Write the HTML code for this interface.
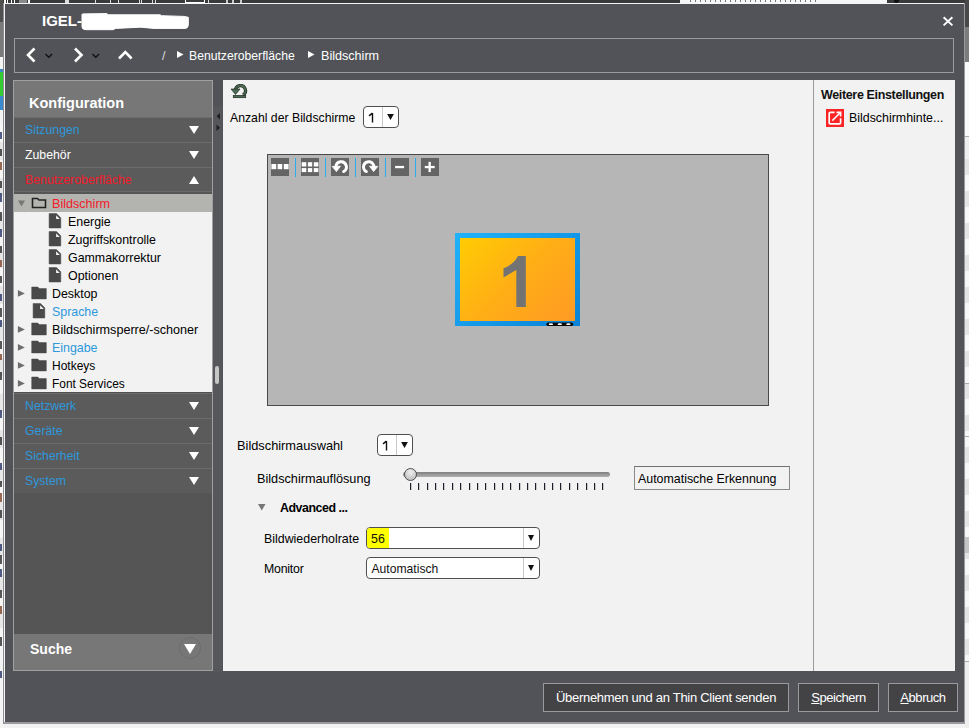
<!DOCTYPE html>
<html><head><meta charset="utf-8">
<style>
*{margin:0;padding:0;box-sizing:border-box}
html,body{width:969px;height:728px;overflow:hidden;background:#f2f2f2;font-family:"Liberation Sans",sans-serif}
.a{position:absolute}
.t{position:absolute;white-space:nowrap;line-height:1}
#win{left:3px;top:3px;width:962px;height:721px;background:#525358;border-left:1px solid #8c8c90;border-bottom:2px solid #9a9a9e;border-right:1px solid #9a9a9e}
#win:before{content:"";position:absolute;left:0;top:0;right:0;height:1px;background:#f4f4f4}
#win:after{content:"";position:absolute;left:0;top:0;bottom:0;width:1px;background:#f4f4f4}
.hdr{position:absolute;left:14px;width:198px;height:25px;background:#5b5b5b;border-top:1px solid #6c6c6c}
.hdr span{position:absolute;left:11px;top:6px;font-size:12.3px;line-height:12px;white-space:nowrap}
.tri{position:absolute;left:175px;top:8px;width:0;height:0;border-left:5px solid transparent;border-right:5px solid transparent;border-top:8px solid #fff}
.triu{position:absolute;left:175px;top:8px;width:0;height:0;border-left:5px solid transparent;border-right:5px solid transparent;border-bottom:8px solid #fff}
.tr{position:absolute;font-size:12.4px;line-height:12px;color:#000;white-space:nowrap}
.blue{color:#2e98dc}
.red{color:#f41a2a}
.white{color:#fff}
.btn{position:absolute;top:683px;height:29px;background:#434346;border:1px solid #9a9a9e;color:#fff;font-size:13px;line-height:27px;text-align:center;letter-spacing:-0.45px}
.exp{position:absolute;left:19px;width:0;height:0;border-top:3.5px solid transparent;border-bottom:3.5px solid transparent;border-left:6px solid #6a6a6a}
.lbl{position:absolute;white-space:nowrap;line-height:1;font-size:12.4px;color:#000}
.dd{position:absolute;background:#fff;border:1.4px solid #505050;border-radius:4px}
.dd .sep{position:absolute;top:0;bottom:0;width:1px;background:#c8c8c8}
.dd .arr{position:absolute;width:0;height:0;border-left:3.8px solid transparent;border-right:3.8px solid transparent;border-top:6.5px solid #111}
.tb{position:absolute;top:158px;width:18px;height:18px;background:#646464}
.bsep{position:absolute;top:158px;width:1px;height:19px;background:#2aaef0}
</style></head><body>
<!-- desktop strips -->
<div class="a" style="left:0;top:0;width:969px;height:3px;background:#3a3a3c"></div>
<div class="a" style="left:3.7px;top:0;width:1.9px;height:2.5px;background:#fff"></div><div class="a" style="left:6.5px;top:0;width:1.5px;height:2.5px;background:#fff"></div><div class="a" style="left:10.8px;top:0;width:1.2px;height:2.5px;background:#fff"></div><div class="a" style="left:13.6px;top:0;width:1.6px;height:2.5px;background:#fff"></div><div class="a" style="left:18.6px;top:0;width:8.6px;height:2.5px;background:#8a8a8a"></div><div class="a" style="left:28.2px;top:0;width:1.5px;height:2.5px;background:#fff"></div><div class="a" style="left:65px;top:0;width:3.5px;height:2.5px;background:#ddd"></div><div class="a" style="left:95px;top:0;width:1px;height:2.5px;background:#ddd"></div><div class="a" style="left:110px;top:0;width:1px;height:2.5px;background:#ddd"></div><div class="a" style="left:118px;top:0;width:1px;height:2.5px;background:#ddd"></div><div class="a" style="left:138.7px;top:0;width:1px;height:2.5px;background:#ddd"></div><div class="a" style="left:140.5px;top:0;width:1px;height:2.5px;background:#ddd"></div><div class="a" style="left:152.3px;top:0;width:1px;height:2.5px;background:#ddd"></div><div class="a" style="left:154.5px;top:0;width:1px;height:2.5px;background:#ddd"></div><div class="a" style="left:185px;top:0;width:1.2px;height:2.5px;background:#fff"></div><div class="a" style="left:203.5px;top:0;width:1.2px;height:2.5px;background:#fff"></div><div class="a" style="left:208px;top:0;width:1px;height:2.5px;background:#ddd"></div><div class="a" style="left:226px;top:0;width:1.5px;height:2.5px;background:#ccc"></div><div class="a" style="left:232px;top:0;width:1.5px;height:2.5px;background:#ccc"></div><div class="a" style="left:240px;top:0;width:1.5px;height:2.5px;background:#ccc"></div><div class="a" style="left:185px;top:1.5px;width:20px;height:1px;background:#fff"></div><div class="a" style="left:680px;top:0;width:207px;height:3px;background:#f6f6f6"></div><div class="a" style="left:690px;top:0;width:130px;height:1.5px;background:repeating-linear-gradient(90deg,#777 0 1px,transparent 1px 5px)"></div><div class="a" style="left:894px;top:0;width:5px;height:2.5px;border-radius:0 0 3px 3px;background:#111"></div>
<div class="a" style="left:0;top:0;width:3px;height:728px;background:#f4f4f4"></div>
<div class="a" style="left:0;top:0;width:3px;height:22px;background:#505050"></div>
<div class="a" style="left:0;top:22px;width:3px;height:35px;background:#7a7a7a"></div>
<div class="a" style="left:0;top:69px;width:3px;height:3px;background:#3a8ad0"></div>
<div class="a" style="left:0;top:72px;width:3px;height:24px;background:#33cc33"></div>
<div class="a" style="left:0;top:96px;width:3px;height:14px;background:#3a8ad0"></div>
<div class="a" style="left:0;top:124px;width:3px;height:520px;background:repeating-linear-gradient(#f6f6f6 0 18px,#e6e6e6 18px 36px)"></div>
<div class="a" style="left:0;top:132px;width:2px;height:7px;background:#1a2a60;opacity:.75"></div><div class="a" style="left:0;top:149px;width:2px;height:7px;background:#222;opacity:.75"></div><div class="a" style="left:0;top:162px;width:2px;height:8px;background:#7a3a20;opacity:.75"></div><div class="a" style="left:0;top:181px;width:2px;height:7px;background:#222;opacity:.75"></div><div class="a" style="left:0;top:193px;width:2px;height:9px;background:#1a2a60;opacity:.75"></div><div class="a" style="left:0;top:212px;width:2px;height:9px;background:#222;opacity:.75"></div><div class="a" style="left:0;top:229px;width:2px;height:8px;background:#1a2a60;opacity:.75"></div><div class="a" style="left:0;top:246px;width:2px;height:7px;background:#222;opacity:.75"></div><div class="a" style="left:0;top:260px;width:2px;height:7px;background:#7a3a20;opacity:.75"></div><div class="a" style="left:0;top:276px;width:2px;height:7px;background:#222;opacity:.75"></div><div class="a" style="left:0;top:294px;width:2px;height:7px;background:#1a2a60;opacity:.75"></div><div class="a" style="left:0;top:308px;width:2px;height:9px;background:#222;opacity:.75"></div><div class="a" style="left:0;top:320px;width:2px;height:7px;background:#1a2a60;opacity:.75"></div><div class="a" style="left:0;top:341px;width:2px;height:8px;background:#222;opacity:.75"></div><div class="a" style="left:0;top:354px;width:2px;height:6px;background:#7a3a20;opacity:.75"></div><div class="a" style="left:0;top:372px;width:2px;height:8px;background:#222;opacity:.75"></div><div class="a" style="left:0;top:410px;width:2px;height:8px;background:#1a2a60;opacity:.75"></div><div class="a" style="left:0;top:437px;width:2px;height:8px;background:#222;opacity:.75"></div><div class="a" style="left:0;top:463px;width:2px;height:7px;background:#1a2a60;opacity:.75"></div><div class="a" style="left:0;top:481px;width:2px;height:6px;background:#222;opacity:.75"></div><div class="a" style="left:0;top:493px;width:2px;height:9px;background:#7a3a20;opacity:.75"></div><div class="a" style="left:0;top:510px;width:2px;height:8px;background:#222;opacity:.75"></div><div class="a" style="left:0;top:544px;width:2px;height:7px;background:#1a2a60;opacity:.75"></div><div class="a" style="left:0;top:555px;width:2px;height:9px;background:#222;opacity:.75"></div><div class="a" style="left:0;top:569px;width:2px;height:8px;background:#1a2a60;opacity:.75"></div><div class="a" style="left:0;top:590px;width:2px;height:8px;background:#222;opacity:.75"></div><div class="a" style="left:0;top:606px;width:2px;height:8px;background:#7a3a20;opacity:.75"></div><div class="a" style="left:0;top:637px;width:2px;height:9px;background:#222;opacity:.75"></div><div class="a" style="left:0;top:671px;width:2px;height:7px;background:#1a2a60;opacity:.75"></div>
<div class="a" style="left:965px;top:0;width:4px;height:728px;background:#eeeeee"></div>
<div class="a" style="left:965px;top:0;width:4px;height:27px;background:#48484a"></div>
<div class="a" style="left:965px;top:27px;width:4px;height:35px;background:#7c7c7c"></div>
<div class="a" style="left:965px;top:159px;width:4px;height:502px;background:repeating-linear-gradient(#e3e3e3 0 16px,#f7f7f7 16px 32px)"></div>
<div class="a" style="left:965px;top:62px;width:4px;height:74px;background:#fafafa"></div>
<div class="a" style="left:965px;top:136px;width:4px;height:1px;background:#aaa"></div>
<div class="a" style="left:965px;top:383px;width:4px;height:1px;background:#aaa"></div>
<div class="a" style="left:965px;top:436px;width:4px;height:1px;background:#aaa"></div>
<div class="a" style="left:965px;top:537px;width:4px;height:16px;background:#c4c4c4"></div>
<div class="a" style="left:965px;top:661px;width:4px;height:1px;background:#aaa"></div>

<div id="win" class="a"></div>

<!-- title -->
<div class="t" style="left:42px;top:13px;font-size:15px;font-weight:bold;color:#fff">IGEL-</div>
<svg class="a" style="left:76px;top:8px" width="120" height="28"><path d="M6 6.5Q6 5.9 7 5.9L31 5.6L32.2 6.8L84.2 6.8L85.4 7.7L107.7 8.4L112.3 9.3L112.3 17.3Q112 20.4 109 20.4L78 20.4L64.4 19.2L39.6 20.4L37.2 21.7L10 21.7Q6 21.5 6 19Z" fill="#fff" stroke="#fff" stroke-width="1" stroke-linejoin="round"/></svg>
<!-- close -->
<svg class="a" style="left:942px;top:15px" width="12" height="12"><path d="M1.6 2.2L10.4 10.4M10.4 2.2L1.6 10.4" stroke="#fff" stroke-width="1.9"/></svg>

<!-- nav box -->
<div class="a" style="left:14px;top:38px;width:940px;height:35px;border:1px solid #9c9ca0"></div>
<svg class="a" style="left:0;top:38px" width="400" height="35">
 <path d="M34.5 10.5L28 17L34.5 23.5" stroke="#fff" stroke-width="2.6" fill="none"/>
 <path d="M45.5 16l3.3 3.3l3.3-3.3" stroke="#111" stroke-width="1.4" fill="none"/>
 <path d="M75 10.5L81.5 17L75 23.5" stroke="#fff" stroke-width="2.6" fill="none"/>
 <path d="M92.5 16l3.3 3.3l3.3-3.3" stroke="#111" stroke-width="1.4" fill="none"/>
 <path d="M119 20.5L125.3 14.2L131.6 20.5" stroke="#fff" stroke-width="2.6" fill="none"/>
 <path d="M177 13L183.5 16.5L177 20z" fill="#fff"/>
 <path d="M308 13L314.5 16.5L308 20z" fill="#fff"/>
</svg>
<div class="t" style="left:162px;top:50px;font-size:12.5px;color:#ddd">/</div>
<div class="t" style="left:189px;top:50px;font-size:12.2px;color:#fff">Benutzeroberfläche</div>
<div class="t" style="left:321px;top:50px;font-size:12.6px;color:#fff">Bildschirm</div>

<!-- left panel -->
<div class="a" style="left:13px;top:80px;width:200px;height:591px;background:#555;border:1px solid #a0a0a0"></div>
<div class="a" style="left:14px;top:81px;width:198px;height:37px;background:#777"></div>
<div class="t" style="left:29px;top:96px;font-size:14.5px;font-weight:bold;color:#fff">Konfiguration</div>

<div class="hdr" style="top:117px"><span class="blue">Sitzungen</span><i class="tri"></i></div>
<div class="hdr" style="top:142px"><span class="white">Zubehör</span><i class="tri"></i></div>
<div class="hdr" style="top:167px"><span class="red">Benutzeroberfläche</span><i class="triu"></i></div>

<div class="a" style="left:14px;top:191px;width:198px;height:3px;background:#565656;border-top:1px solid #686868"></div>
<div class="a" style="left:14px;top:194px;width:198px;height:198px;background:#f2f2f2"></div>
<div class="a" style="left:14px;top:194px;width:198px;height:18px;background:#b3b3af"></div>

<!-- tree icons -->
<svg class="a" style="left:14px;top:193px" width="198" height="199">
 <path d="M4 7.5h7L7.5 13.5z" fill="#777"/>
 <path d="M18.5 5.5h5l1.5 1.5h6.5v7.5h-13z" fill="none" stroke="#222" stroke-width="1.6"/>
 <g fill="#494949" stroke="#494949" stroke-width="0.5" stroke-linejoin="round"><path d="M35.1 20.5H42.5L46.8 24.8V35.0H35.1Z"/><path d="M35.1 38.5H42.5L46.8 42.8V53.0H35.1Z"/><path d="M35.1 56.5H42.5L46.8 60.8V71.0H35.1Z"/><path d="M35.1 74.5H42.5L46.8 78.8V89.0H35.1Z"/><path d="M19.1 110.5H26.5L30.8 114.8V125.0H19.1Z"/><path d="M17.7 94.0H23.8L25.3 95.6H32.3V105.9H17.7Z"/><path d="M17.7 130.0H23.8L25.3 131.6H32.3V141.9H17.7Z"/><path d="M17.7 148.0H23.8L25.3 149.6H32.3V159.9H17.7Z"/><path d="M17.7 166.0H23.8L25.3 167.6H32.3V177.9H17.7Z"/><path d="M17.7 184.0H23.8L25.3 185.6H32.3V195.9H17.7Z"/></g>
 <g fill="#f4f4f4"><path d="M42.1 22.3V25.9H45.8Z"/><path d="M42.1 40.3V43.9H45.8Z"/><path d="M42.1 58.3V61.9H45.8Z"/><path d="M42.1 76.3V79.9H45.8Z"/><path d="M26.1 112.3V115.9H29.8Z"/></g>
 <g fill="#6e6e6e"><path d="M3.9 97.0l6.9 3.4l-6.9 3.4z"/><path d="M3.9 133.0l6.9 3.4l-6.9 3.4z"/><path d="M3.9 151.0l6.9 3.4l-6.9 3.4z"/><path d="M3.9 169.0l6.9 3.4l-6.9 3.4z"/><path d="M3.9 187.0l6.9 3.4l-6.9 3.4z"/></g>
</svg>

<div class="tr red" style="left:52px;top:198px;font-size:12.6px">Bildschirm</div>
<div class="tr" style="left:68px;top:216px">Energie</div>
<div class="tr" style="left:68px;top:234px">Zugriffskontrolle</div>
<div class="tr" style="left:68px;top:252px">Gammakorrektur</div>
<div class="tr" style="left:68px;top:270px">Optionen</div>
<div class="tr" style="left:52px;top:288px">Desktop</div>
<div class="tr blue" style="left:52px;top:306px">Sprache</div>
<div class="tr" style="left:52px;top:324px;font-size:12.6px">Bildschirmsperre/-schoner</div>
<div class="tr blue" style="left:52px;top:342px">Eingabe</div>
<div class="tr" style="left:52px;top:360px;font-size:12px">Hotkeys</div>
<div class="tr" style="left:52px;top:378px;font-size:11.9px">Font Services</div>

<div class="a" style="left:14px;top:392px;width:198px;height:1px;background:#505050"></div>
<div class="hdr" style="top:393px"><span class="blue">Netzwerk</span><i class="tri"></i></div>
<div class="hdr" style="top:418px"><span class="blue">Geräte</span><i class="tri"></i></div>
<div class="hdr" style="top:443px"><span class="blue">Sicherheit</span><i class="tri"></i></div>
<div class="hdr" style="top:468px"><span class="blue">System</span><i class="tri"></i></div>

<div class="a" style="left:14px;top:634px;width:198px;height:36px;background:#777"></div>
<div class="t" style="left:30px;top:642px;font-size:14px;font-weight:bold;color:#fff">Suche</div>
<div class="a" style="left:179px;top:637px;width:22px;height:22px;border-radius:50%;border:1px solid #6c6c6c"></div>
<div class="a" style="left:183.8px;top:644px;width:0;height:0;border-left:6.2px solid transparent;border-right:6.2px solid transparent;border-top:10.2px solid #fff"></div>

<!-- splitter -->
<div class="a" style="left:213px;top:106px;width:9px;height:566px;background:#56575b"></div>
<svg class="a" style="left:213px;top:110px" width="9" height="25"><path d="M7 3v6.5l-3.5-3.25z" fill="#1e1e1e"/><path d="M3.5 14.5v6.5l3.5-3.25z" fill="#1e1e1e"/></svg>
<div class="a" style="left:215.3px;top:366px;width:3.3px;height:18px;background:#c6c6c6;border-radius:2px"></div>

<!-- main content -->
<div class="a" style="left:223px;top:80px;width:590px;height:591px;background:#f2f2f2"></div>
<div class="a" style="left:813px;top:80px;width:142px;height:591px;background:#f2f2f2;border-left:1px solid #9a9a9a"></div>

<!-- reset icon -->
<svg class="a" style="left:226px;top:80px" width="28" height="22">
 <path d="M9.5 10.6A5 5 0 1 1 17 14.9" fill="none" stroke="#1e2a20" stroke-width="3.2"/>
 <path d="M9.5 10.6A5 5 0 1 1 17 14.9" fill="none" stroke="#4d6b52" stroke-width="1.8"/>
 <path d="M5 9L14 9L9.5 14.5z" fill="#4d6b52" stroke="#1e2a20" stroke-width="0.7"/>
 <rect x="7.3" y="15.4" width="12.4" height="2.3" fill="#4d6b52" stroke="#1e2a20" stroke-width="0.7"/>
</svg>

<div class="lbl" style="left:230px;top:112px;font-size:12.25px">Anzahl der Bildschirme</div>
<div class="dd" style="left:363px;top:106px;width:36px;height:22px"><i class="sep" style="left:17.5px"></i><svg class="a" style="left:-1.4px;top:-1.4px" width="36" height="22"><path d="M6 9.9L9.4 7.1M9.5 6.9V16.5" stroke="#111" stroke-width="1.4" fill="none"/><path d="M24.1 8.1H30.9L27.5 13.9z" fill="#111"/></svg></div>

<!-- canvas -->
<div class="a" style="left:267px;top:154px;width:502px;height:252px;background:#b6b6b6;border:1px solid #4a4a4a;border-right-width:1.5px;border-bottom-width:1.5px"></div>
<div class="tb" style="left:271px"></div>
<div class="tb" style="left:301px"></div>
<div class="tb" style="left:331px"></div>
<div class="tb" style="left:361px"></div>
<div class="tb" style="left:391px"></div>
<div class="tb" style="left:421px"></div>
<div class="bsep" style="left:295px"></div>
<div class="bsep" style="left:325px"></div>
<div class="bsep" style="left:355px"></div>
<div class="bsep" style="left:385px"></div>
<div class="bsep" style="left:415px"></div>
<svg class="a" style="left:271px;top:158px" width="170" height="18">
 <g fill="#fff">
  <rect x="0.4" y="6" width="4.8" height="5.2"/><rect x="6.6" y="6" width="4.6" height="5.2"/><rect x="12.8" y="6" width="4.8" height="5.2"/>
  <rect x="30.7" y="4.2" width="4.6" height="4.3"/><rect x="36.9" y="4.2" width="4.3" height="4.3"/><rect x="42.8" y="4.2" width="4.6" height="4.3"/>
  <rect x="30.7" y="10.1" width="4.6" height="4"/><rect x="36.9" y="10.1" width="4.3" height="4"/><rect x="42.8" y="10.1" width="4.6" height="4"/>
  <rect x="124.1" y="7.9" width="9" height="2.3"/>
  <rect x="153.8" y="7.9" width="9.9" height="2.3"/><rect x="157.5" y="3.9" width="2.3" height="10.2"/>
 </g>
 <path d="M65 9A5.2 5.2 0 1 1 72.7 13.5" fill="none" stroke="#fff" stroke-width="3" stroke-linecap="round"/>
 <path d="M61.2 8.4L69.5 8.2L65.4 13.6z" fill="#fff" stroke="#fff" stroke-width="0.8" stroke-linejoin="round"/>
 <path d="M102.9 9A5.2 5.2 0 1 0 95.3 13.5" fill="none" stroke="#fff" stroke-width="3" stroke-linecap="round"/>
 <path d="M106.8 8.4L98.5 8.2L102.6 13.6z" fill="#fff" stroke="#fff" stroke-width="0.8" stroke-linejoin="round"/>
</svg>

<!-- monitor -->
<div class="a" style="left:455px;top:233px;width:125px;height:93px;background:linear-gradient(135deg,#20b2fb,#0a82d6)"></div>
<div class="a" style="left:460px;top:238px;width:115px;height:83px;background:linear-gradient(135deg,#ffcc02 0%,#ffae16 50%,#ff9a24 100%)"></div>
<svg class="a" style="left:495px;top:250px" width="40" height="62"><path d="M23 6H30.8V56.9H21.3V20L8.5 27.4V18.3C14 16.5 20 12 23 6Z" fill="#737373"/></svg>
<svg class="a" style="left:546px;top:322px" width="28" height="5"><rect x="0.4" y="0.5" width="26.8" height="3.5" rx="1.7" fill="#0a0a0a"/><g fill="#fff"><ellipse cx="4.9" cy="2.2" rx="2.2" ry="0.9"/><ellipse cx="13.8" cy="2.2" rx="2.2" ry="0.9"/><ellipse cx="22.4" cy="2.2" rx="2.2" ry="0.9"/></g></svg>

<div class="lbl" style="left:237px;top:440px;font-size:12.8px">Bildschirmauswahl</div>
<div class="dd" style="left:377px;top:434px;width:36px;height:22px"><i class="sep" style="left:17.5px"></i><svg class="a" style="left:-1.4px;top:-1.4px" width="36" height="22"><path d="M6 9.9L9.4 7.1M9.5 6.9V16.5" stroke="#111" stroke-width="1.4" fill="none"/><path d="M24.1 8.1H30.9L27.5 13.9z" fill="#111"/></svg></div>

<div class="lbl" style="left:257px;top:472.5px;font-size:12.7px">Bildschirmauflösung</div>
<!-- slider -->
<div class="a" style="left:403px;top:472px;width:207px;height:5px;border-radius:3px;background:linear-gradient(#808080,#b0b0b0)"></div>
<div class="a" style="left:404px;top:468px;width:13px;height:13px;border-radius:50%;border:1.2px solid #505050;background:radial-gradient(circle at 50% 30%,#f0f0f0,#b4b4b4)"></div>
<svg class="a" style="left:400px;top:482px" width="220" height="10"><rect x="10" y="1" width="1.2" height="7" fill="#1a1e28"/><rect x="18" y="1" width="1.2" height="7" fill="#1a1e28"/><rect x="27" y="1" width="1.2" height="7" fill="#1a1e28"/><rect x="35" y="1" width="1.2" height="7" fill="#1a1e28"/><rect x="43" y="1" width="1.2" height="7" fill="#1a1e28"/><rect x="52" y="1" width="1.2" height="7" fill="#1a1e28"/><rect x="60" y="1" width="1.2" height="7" fill="#1a1e28"/><rect x="69" y="1" width="1.2" height="7" fill="#1a1e28"/><rect x="77" y="1" width="1.2" height="7" fill="#1a1e28"/><rect x="85" y="1" width="1.2" height="7" fill="#1a1e28"/><rect x="94" y="1" width="1.2" height="7" fill="#1a1e28"/><rect x="102" y="1" width="1.2" height="7" fill="#1a1e28"/><rect x="110" y="1" width="1.2" height="7" fill="#1a1e28"/><rect x="119" y="1" width="1.2" height="7" fill="#1a1e28"/><rect x="127" y="1" width="1.2" height="7" fill="#1a1e28"/><rect x="135" y="1" width="1.2" height="7" fill="#1a1e28"/><rect x="144" y="1" width="1.2" height="7" fill="#1a1e28"/><rect x="152" y="1" width="1.2" height="7" fill="#1a1e28"/><rect x="160" y="1" width="1.2" height="7" fill="#1a1e28"/><rect x="169" y="1" width="1.2" height="7" fill="#1a1e28"/><rect x="177" y="1" width="1.2" height="7" fill="#1a1e28"/><rect x="186" y="1" width="1.2" height="7" fill="#1a1e28"/><rect x="194" y="1" width="1.2" height="7" fill="#1a1e28"/><rect x="202" y="1" width="1.2" height="7" fill="#1a1e28"/></svg>

<div class="a" style="left:634px;top:466px;width:156px;height:24px;border:1px solid #8a8a8a;border-top-color:#707070"></div>
<div class="lbl" style="left:638px;top:473px">Automatische Erkennung</div>

<svg class="a" style="left:255px;top:500px" width="14" height="14"><path d="M3 4h7.5l-3.75 6.5z" fill="#777"/></svg>
<div class="lbl" style="left:280px;top:501.5px;font-weight:bold;font-size:12.4px;letter-spacing:-0.45px">Advanced ...</div>

<div class="lbl" style="left:264px;top:533px">Bildwiederholrate</div>
<div class="dd" style="left:366px;top:527px;width:174px;height:22px;overflow:hidden"><div class="a" style="left:0;top:0;width:22px;height:20px;background:#ffff00"></div><div class="t" style="left:4px;top:5px;font-size:12.4px;color:#111">56</div><i class="sep" style="left:155.5px"></i><i class="arr" style="left:160.5px;top:6.5px"></i></div>

<div class="lbl" style="left:264px;top:563px;font-size:12.3px;letter-spacing:-0.2px">Monitor</div>
<div class="dd" style="left:366px;top:557px;width:174px;height:22px"><div class="t" style="left:4.5px;top:5px;font-size:12.15px;color:#111">Automatisch</div><i class="sep" style="left:155.5px"></i><i class="arr" style="left:160.5px;top:6.5px"></i></div>

<!-- right panel -->
<div class="t" style="left:821px;top:89px;font-size:12.5px;letter-spacing:-0.35px;font-weight:bold;color:#111">Weitere Einstellungen</div>
<div class="a" style="left:826px;top:109px;width:18px;height:18px;background:#fb2424"></div>
<svg class="a" style="left:826px;top:109px" width="18" height="18"><g fill="none" stroke="#fff" stroke-width="1.7"><path d="M8.6 3.4H4.2Q3.2 3.4 3.2 4.4V13.8Q3.2 14.8 4.2 14.8H13.6Q14.6 14.8 14.6 13.8V9.3"/><path d="M10.5 3.4H14.6V7.5"/></g><path d="M6.3 11.6L14.2 3.7" stroke="#fff" stroke-width="1.5"/></svg>
<div class="lbl" style="left:849px;top:112px">Bildschirmhinte...</div>

<!-- buttons -->
<div class="btn" style="left:543px;width:246px;letter-spacing:-0.28px">Übernehmen und an Thin Client senden</div>
<div class="btn" style="left:798px;width:81px"><u>S</u>peichern</div>
<div class="btn" style="left:888px;width:70px"><u>A</u>bbruch</div>

</body></html>
